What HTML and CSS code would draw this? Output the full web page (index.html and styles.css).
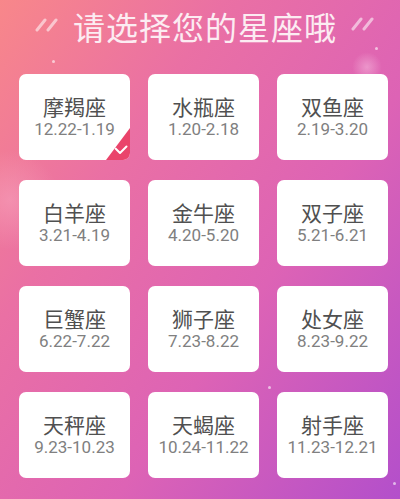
FILE: index.html
```html
<!DOCTYPE html>
<html lang="zh">
<head>
<meta charset="utf-8">
<title>请选择您的星座哦</title>
<link rel="stylesheet" href="styles.css">
</head>
<body>
<div class="page">
  <span class="bokeh bokeh-a"></span>
  <span class="bokeh bokeh-b"></span>
  <span class="dot dot-a"></span>
  <span class="dot dot-b"></span>
  <span class="dot dot-c"></span>
  <span class="dot dot-d"></span>
  <header class="header">
    <svg class="dash" width="24" height="16" viewBox="0 0 24 16"><path d="M2 14 L10 4 M13 14 L21 4" stroke="rgba(255,255,255,0.55)" stroke-width="3" stroke-linecap="round" fill="none"/></svg>
    <h1 class="title">请选择您的星座哦</h1>
    <svg class="dash" width="24" height="16" viewBox="0 0 24 16"><path d="M3 13 L11 3 M14 13 L22 3" stroke="rgba(255,255,255,0.55)" stroke-width="3" stroke-linecap="round" fill="none"/></svg>
  </header>
  <main class="grid">
    <div class="card selected">
      <div class="name">摩羯座</div><div class="date">12.22-1.19</div>
      <span class="badge"><svg width="14" height="10" viewBox="0 0 14 10"><path d="M1.5 3.5 L6 8 L12.5 1.5" stroke="#fff" stroke-width="2" fill="none" stroke-linecap="round" stroke-linejoin="round"/></svg></span>
    </div>
    <div class="card"><div class="name">水瓶座</div><div class="date">1.20-2.18</div></div>
    <div class="card"><div class="name">双鱼座</div><div class="date">2.19-3.20</div></div>
    <div class="card"><div class="name">白羊座</div><div class="date">3.21-4.19</div></div>
    <div class="card"><div class="name">金牛座</div><div class="date">4.20-5.20</div></div>
    <div class="card"><div class="name">双子座</div><div class="date">5.21-6.21</div></div>
    <div class="card"><div class="name">巨蟹座</div><div class="date">6.22-7.22</div></div>
    <div class="card"><div class="name">狮子座</div><div class="date">7.23-8.22</div></div>
    <div class="card"><div class="name">处女座</div><div class="date">8.23-9.22</div></div>
    <div class="card"><div class="name">天秤座</div><div class="date">9.23-10.23</div></div>
    <div class="card"><div class="name">天蝎座</div><div class="date">10.24-11.22</div></div>
    <div class="card"><div class="name">射手座</div><div class="date">11.23-12.21</div></div>
  </main>
</div>
</body>
</html>
```
FILE: styles.css
```css
* { box-sizing: border-box; margin: 0; padding: 0; }
html, body { width: 400px; height: 499px; overflow: hidden; }
body {
  font-family: Roboto, "Noto Sans CJK SC", sans-serif;
}
.page {
  position: relative;
  width: 400px;
  height: 499px;
  overflow: hidden;
  background:
    linear-gradient(125deg, #f8878a 0%, #ea70a4 30%, #dd63b5 62%, #b34fcb 100%);
}
.bokeh {
  position: absolute;
  border-radius: 50%;
  pointer-events: none;
}
.bokeh-a {
  left: -40px; top: 150px; width: 100px; height: 100px;
  background: radial-gradient(circle, rgba(255,200,220,0.3) 0%, rgba(255,200,220,0) 70%);
}
.bokeh-b {
  left: 352px; top: 52px; width: 30px; height: 30px;
  background: radial-gradient(circle, rgba(255,220,240,0.4) 0%, rgba(255,220,240,0) 70%);
}
.dot {
  position: absolute;
  width: 3px; height: 3px;
  border-radius: 50%;
  background: rgba(255,255,255,0.6);
}
.dot-a { left: 52px; top: 60px; }
.dot-b { left: 375px; top: 47px; }
.dot-c { left: 268px; top: 386px; }
.dot-d { left: 393px; top: 482px; }
.header {
  height: 52px;
  display: flex;
  align-items: center;
  justify-content: center;
  gap: 14px;
  padding-left: 9px;
}
.dash { display: block; margin-top: -4px; }
.title {
  font-family: "Noto Sans CJK SC", sans-serif;
  font-size: 32px;
  font-weight: 400;
  line-height: 40px;
  letter-spacing: 1px;
  margin-right: -1px;
  color: #fcecf2;
}
.grid {
  margin-top: 22px;
  padding-left: 19px;
  display: grid;
  grid-template-columns: repeat(3, 111px);
  grid-auto-rows: 86px;
  column-gap: 18px;
  row-gap: 20px;
}
.card {
  position: relative;
  background: #fff;
  border-radius: 7px;
  display: flex;
  flex-direction: column;
  align-items: center;
  justify-content: center;
  padding-bottom: 2px;
  overflow: hidden;
}
.name {
  font-family: "Noto Sans CJK SC", sans-serif;
  font-size: 21px;
  line-height: 25px;
  color: #505050;
}
.date {
  font-family: Roboto, sans-serif;
  font-size: 17px;
  line-height: 20px;
  color: #808080;
}
.badge {
  position: absolute;
  right: 0;
  bottom: 0;
  width: 24px;
  height: 32px;
  background: #ea446b;
  clip-path: polygon(100% 0, 100% 100%, 0 100%);
  display: flex;
  align-items: flex-end;
  justify-content: flex-end;
  padding: 0 2px 5px 0;
}
```
